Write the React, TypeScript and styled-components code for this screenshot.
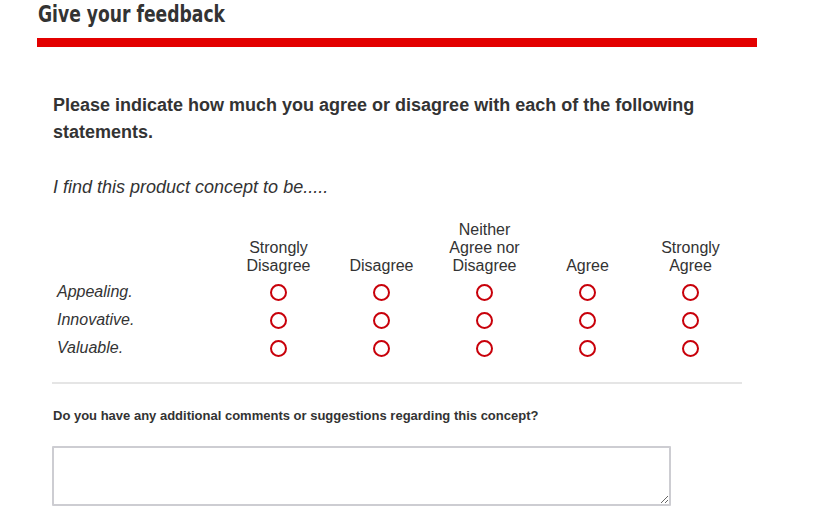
import styled, { createGlobalStyle } from 'styled-components';

type Statement = { label: string };

const scale: string[][] = [
	['Strongly', 'Disagree'],
	['Disagree'],
	['Neither', 'Agree nor', 'Disagree'],
	['Agree'],
	['Strongly', 'Agree'],
];

const statements: Statement[] = [{ label: 'Appealing.' }, { label: 'Innovative.' }, { label: 'Valuable.' }];

const GlobalStyle = createGlobalStyle`
	body {
		margin: 0;
		background: #fff;
		font-family: "Liberation Sans", Arial, sans-serif;
		color: #333;
	}
`;

const App = () => {
	return (
		<>
			<GlobalStyle />
			<Page>
				<Title>
					<span>Give your feedback</span>
				</Title>
				<RedBar />
				<Body>
					<Intro>Please indicate how much you agree or disagree with each of the following statements.</Intro>
					<Lead>I find this product concept to be.....</Lead>
					<Matrix>
						<HeadCell />
						{scale.map((lines, idx) => (
							<HeadCell key={idx}>
								{lines.map((line) => (
									<div key={line}>{line}</div>
								))}
							</HeadCell>
						))}
						{statements.map((s) => (
							<Row key={s.label}>
								<RowLabel>{s.label}</RowLabel>
								{scale.map((_, idx) => (
									<RadioCell key={idx}>
										<Radio type='radio' name={s.label} />
									</RadioCell>
								))}
							</Row>
						))}
					</Matrix>
					<Divider />
					<Question>Do you have any additional comments or suggestions regarding this concept?</Question>
					<Comments />
				</Body>
			</Page>
		</>
	);
};

const Page = styled.div`
	padding-left: 37px;
	width: 720px;
`;

const Title = styled.h1`
	margin: 0;
	padding-left: 1px;
	font-family: "Liberation Sans Narrow", "DejaVu Sans Condensed", sans-serif;
	font-stretch: condensed;
	font-weight: 700;
	font-size: 23px;
	line-height: 28px;
	color: #333;
	span {
		display: inline-block;
		transform: scaleX(0.83);
		transform-origin: left center;
	}
`;

const RedBar = styled.div`
	margin-top: 10px;
	height: 9px;
	background: #e30000;
`;

const Body = styled.div`
	padding-left: 15px;
	width: 690px;
`;

const Intro = styled.p`
	margin: 45px 0 0;
	font-size: 18px;
	font-weight: 700;
	line-height: 27px;
	padding-left: 1px;
`;

const Lead = styled.p`
	margin: 30px 0 0;
	font-size: 18px;
	font-style: italic;
	line-height: 22px;
	padding-left: 1px;
`;

const Matrix = styled.div`
	margin-top: 23px;
	display: grid;
	grid-template-columns: 175px repeat(5, 1fr);
	align-items: end;
`;

const HeadCell = styled.div`
	text-align: center;
	font-size: 16px;
	line-height: 18px;
	padding-bottom: 3px;
`;

const Row = styled.div`
	display: contents;
`;

const RowLabel = styled.div`
	height: 28px;
	display: flex;
	align-items: center;
	padding-left: 5px;
	font-size: 16px;
	font-style: italic;
`;

const RadioCell = styled.div`
	height: 28px;
	display: flex;
	align-items: center;
	justify-content: center;
`;

const Radio = styled.input`
	appearance: none;
	margin: 0;
	width: 17px;
	height: 17px;
	border: 2px solid #c8000a;
	border-radius: 50%;
	background: #fff;
	box-sizing: border-box;
	cursor: pointer;
	&:checked {
		background: radial-gradient(circle, #c8000a 0 4px, #fff 4.5px);
	}
`;

const Divider = styled.hr`
	margin: 20px 0 0;
	border: 0;
	height: 2px;
	background: #e5e5e5;
`;

const Question = styled.p`
	margin: 24px 0 0;
	font-size: 13px;
	font-weight: 700;
	line-height: 16px;
	padding-left: 1px;
`;

const Comments = styled.textarea`
	display: block;
	margin-top: 22px;
	width: 619px;
	height: 60px;
	box-sizing: border-box;
	border: 2px solid #cdcdd2;
	border-radius: 1px;
	resize: vertical;
	font-family: "Liberation Sans", Arial, sans-serif;
	font-size: 14px;
`;

export default App;
